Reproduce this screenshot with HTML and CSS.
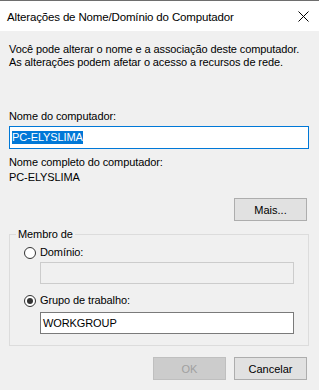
FILE: index.html
```html
<!DOCTYPE html>
<html lang="pt-BR">
<head>
    <meta charset="UTF-8">
    <meta name="viewport" content="width=device-width, initial-scale=1.0">
    <title>Alterações de Nome/Domínio do Computador</title>
    <link rel="stylesheet" href="styles.css">
</head>
<body>
    <div class="window">
        <div class="titlebar">
            <span class="title">Alterações de Nome/Domínio do Computador</span>
            <svg class="close" width="11" height="11" viewBox="0 0 11 11">
                <path d="M0.5 0.5 L10.5 10.5 M10.5 0.5 L0.5 10.5" stroke="#000" stroke-width="1" fill="none"/>
            </svg>
        </div>

        <div class="content">
            <p class="intro">Você pode alterar o nome e a associação deste computador.<br>As alterações podem afetar o acesso a recursos de rede.</p>

            <div class="label first">Nome do computador:</div>
            <div class="textbox focused"><span class="selected">PC-ELYSLIMA</span></div>

            <div class="label full">Nome completo do computador:</div>
            <div class="value">PC-ELYSLIMA</div>

            <div class="btn-row more-row">
                <button class="btn">Mais...</button>
            </div>

            <fieldset class="group">
                <legend>Membro de</legend>

                <div class="radio-row">
                    <span class="radio"></span>
                    <span>Domínio:</span>
                </div>
                <div class="textbox disabled domain"></div>

                <div class="radio-row second">
                    <span class="radio checked"></span>
                    <span>Grupo de trabalho:</span>
                </div>
                <div class="textbox workgroup">WORKGROUP</div>
            </fieldset>

            <div class="btn-row footer">
                <button class="btn" disabled>OK</button>
                <button class="btn">Cancelar</button>
            </div>
        </div>
    </div>
</body>
</html>
```

FILE: styles.css
```css
body {
    margin: 0;
    font-family: "Liberation Sans", Arial, sans-serif;
    font-size: 11px;
    letter-spacing: -0.1px;
    color: #000;
    background-color: #f0f0f0;
}
.window {
    width: 319px;
    height: 390px;
    box-sizing: border-box;
    border-top: 1px solid #6e6e6e;
    background-color: #f0f0f0;
}
.titlebar {
    height: 30px;
    background-color: #fff;
    display: flex;
    align-items: center;
    justify-content: space-between;
    padding: 1px 10px 0 7px;
    box-sizing: border-box;
}
.title {
    font-size: 11.5px;
    letter-spacing: -0.15px;
    color: #000;
}
.content {
    padding: 12px 10px 0 9px;
}
.intro {
    margin: 0;
    line-height: 13px;
}
.label, .value {
    line-height: 13px;
}
.label.first {
    margin-top: 41px;
}
.label.full {
    margin-top: 7px;
}
.value {
    margin-top: 2px;
}
.textbox {
    height: 23px;
    box-sizing: border-box;
    border: 1px solid #7a7a7a;
    background-color: #fff;
    padding: 0 2px;
    display: flex;
    align-items: center;
    margin-top: 3px;
}
.textbox.focused {
    border-color: #0078d7;
}
.selected {
    background-color: #0078d7;
    color: #fff;
    line-height: 13px;
}
.btn-row {
    display: flex;
    justify-content: flex-end;
    gap: 8px;
    padding-right: 2px;
}
.more-row {
    margin-top: 14px;
}
.btn {
    width: 73px;
    height: 23px;
    box-sizing: border-box;
    border: 1px solid #adadad;
    background-color: #e1e1e1;
    font-family: "Liberation Sans", Arial, sans-serif;
    font-size: 11px;
    color: #000;
    padding: 0;
}
.btn:disabled {
    background-color: #cccccc;
    border-color: #bfbfbf;
    color: #a0a0a0;
}
.group {
    margin: 7px 0 0 0;
    border: 1px solid #dcdcdc;
    padding: 5px 14px 11px 14px;
}
.group legend {
    margin-left: -8px;
    padding: 0 2px;
    line-height: 13px;
}
.radio-row {
    display: flex;
    align-items: center;
    gap: 4px;
    line-height: 13px;
}
.radio-row.second {
    margin-top: 10px;
}
.radio {
    width: 12px;
    height: 12px;
    box-sizing: border-box;
    border: 1px solid #333;
    border-radius: 50%;
    background-color: #fff;
    display: flex;
    align-items: center;
    justify-content: center;
}
.radio.checked::after {
    content: "";
    width: 6px;
    height: 6px;
    border-radius: 50%;
    background-color: #333;
}
.textbox.domain, .textbox.workgroup {
    margin-left: 16px;
    height: 22px;
    width: 254px;
}
.textbox.disabled {
    border-color: #cccccc;
    background-color: #f0f0f0;
}
.textbox.workgroup {
    margin-top: 5px;
}
.footer {
    margin-top: 11px;
}
```
